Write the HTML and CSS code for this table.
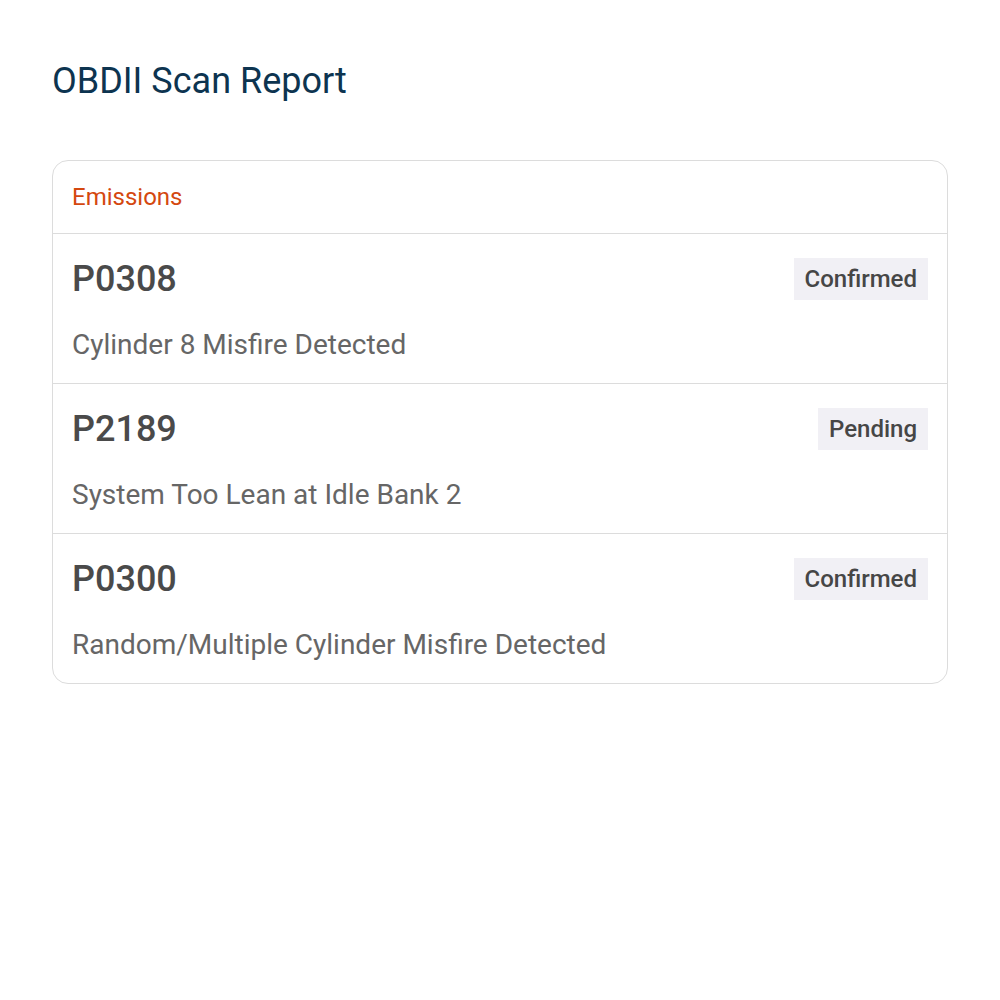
FILE: index.html
```html
<!DOCTYPE html>
<html lang="en">
<head>
  <meta charset="UTF-8" />
  <meta name="viewport" content="width=device-width, initial-scale=1">
  <title>OBDII Scan Report</title>
  <link rel="stylesheet" href="styles.css">
</head>
<body>

  <div class="page">
    <h1 class="title">OBDII Scan Report</h1>

    <div class="card">
      <div class="card-header">Emissions</div>

      <div class="code-row">
        <div class="code-top">
          <span class="code">P0308</span>
          <span class="badge">Confirmed</span>
        </div>
        <div class="desc">Cylinder 8 Misfire Detected</div>
      </div>

      <div class="code-row">
        <div class="code-top">
          <span class="code">P2189</span>
          <span class="badge">Pending</span>
        </div>
        <div class="desc">System Too Lean at Idle Bank 2</div>
      </div>

      <div class="code-row">
        <div class="code-top">
          <span class="code">P0300</span>
          <span class="badge">Confirmed</span>
        </div>
        <div class="desc">Random/Multiple Cylinder Misfire Detected</div>
      </div>
    </div>
  </div>

</body>
</html>
```

FILE: styles.css
```css
body {
  margin: 0;
  background: #fff;
  font-family: Roboto, 'Liberation Sans', sans-serif;
}

.page {
  padding: 60px 52px;
}

.title {
  margin: 0 0 57px;
  font-size: 36px;
  font-weight: 400;
  line-height: 1.2;
  color: #0d3450;
}

.card {
  border: 1px solid #dcdcdc;
  border-radius: 16px;
  overflow: hidden;
}

.card-header {
  padding: 20px 20px 20px 19px;
  font-size: 24px;
  line-height: 32px;
  color: #d4480f;
  border-bottom: 1px solid #dcdcdc;
}

.code-row {
  display: flex;
  flex-direction: column;
  gap: 28px;
  padding: 24px 19px 21px 19px;
  border-bottom: 1px solid #dcdcdc;
}

.code-row:last-child {
  border-bottom: none;
}

.code-top {
  display: flex;
  justify-content: space-between;
  align-items: center;
  height: 42px;
}

.code {
  font-size: 36px;
  font-weight: 500;
  color: #4a4a4a;
}

.badge {
  background: #f1f0f5;
  color: #464646;
  font-size: 24px;
  font-weight: 500;
  line-height: 42px;
  padding: 0 11px;
}

.desc {
  font-size: 28px;
  line-height: 34px;
  color: #666;
}
```
